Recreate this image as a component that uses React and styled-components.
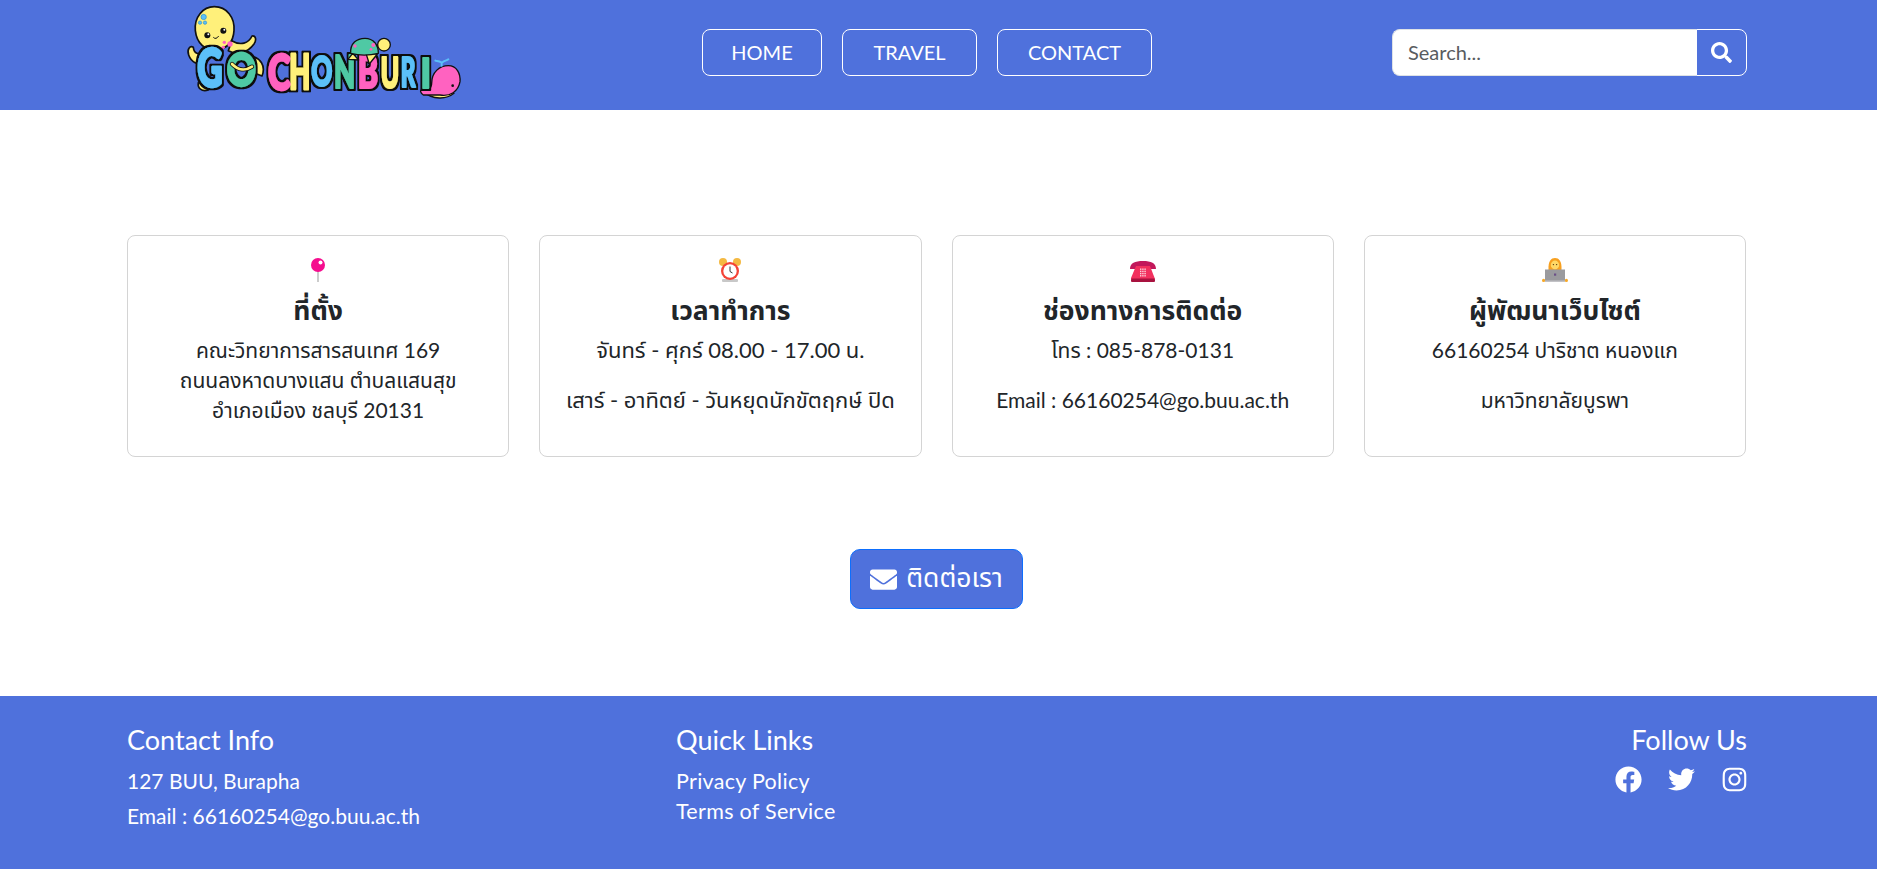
import React from 'react'
import styled, { createGlobalStyle } from 'styled-components'
import { FaSearch, FaEnvelope, FaFacebook, FaTwitter, FaInstagram } from 'react-icons/fa'

const BLUE = '#4f71dc'
const FONT = '"Lato", "Noto Sans", "Noto Sans Thai", "Liberation Sans", sans-serif'

const GlobalStyle = createGlobalStyle`
  * { box-sizing: border-box; }
  html, body { margin: 0; padding: 0; background: #fff; }
  body { font-family: ${FONT}; color: #212529; }
`

// letter, x, baseline, scale x, scale y, fill
const letters = [
  ['G', 82, 262, 1.05, 1.62, '#5bc0f8'],
  ['O', 170, 258, 1.08, 1.38, '#4fc9a4'],
  ['C', 294, 270, 1.03, 1.5, '#ff62c0'],
  ['H', 358, 266, 0.82, 1.45, '#fff07a'],
  ['O', 424, 258, 0.78, 1.28, '#5bc0f8'],
  ['N', 492, 263, 0.82, 1.34, '#4fc9a4'],
  ['B', 563, 263, 0.92, 1.34, '#ff62c0'],
  ['U', 632, 263, 0.74, 1.28, '#fff07a'],
  ['R', 692, 260, 0.68, 1.24, '#5bc0f8'],
  ['I', 752, 263, 1.0, 1.28, '#4fc9a4'],
]

const Logo = () => (
  <LogoSvg viewBox="0 0 960 330" role="img" aria-label="Go Chonburi">
    <defs>
      <filter id="letter-outline" x="-3%" y="-5%" width="106%" height="110%">
        <feMorphology in="SourceAlpha" operator="dilate" radius="5" result="grown" />
        <feFlood floodColor="#111" />
        <feComposite in2="grown" operator="in" result="edge" />
        <feMerge>
          <feMergeNode in="edge" />
          <feMergeNode in="SourceGraphic" />
        </feMerge>
      </filter>
    </defs>

    <g stroke="#111" strokeWidth="5" strokeLinejoin="round">
      {/* octopus */}
      <path d="M185 122 C212 138 236 130 246 108 C258 106 260 120 252 132 C232 160 200 166 175 152 Z" fill="#fff07a" />
      <path d="M105 152 C85 168 72 160 70 142 C60 136 50 148 56 165 C64 188 85 198 110 188 Z" fill="#fff07a" />
      <path d="M240 168 C272 172 288 198 276 228 L250 218 Z" fill="#fff07a" />
      <path d="M85 248 C82 265 95 276 115 270 L110 245 Z" fill="#fff07a" />
      <path d="M133 20 C170 20 195 52 192 92 C190 125 175 145 140 150 C105 152 80 130 76 92 C72 52 98 20 133 20 Z" fill="#fff07a" />
    </g>
    <circle cx="101" cy="51" r="8" fill="#5bc0f8" stroke="#2a90d0" strokeWidth="2" />
    <circle cx="90" cy="68" r="5" fill="#5bc0f8" stroke="#2a90d0" strokeWidth="2" />
    <circle cx="105" cy="68" r="5" fill="#5bc0f8" stroke="#2a90d0" strokeWidth="2" />
    <circle cx="112" cy="106" r="9" fill="#111" />
    <circle cx="160" cy="92" r="9" fill="#111" />
    <circle cx="115" cy="103" r="3" fill="#fff" />
    <circle cx="163" cy="89" r="3" fill="#fff" />
    <path d="M130 112 Q138 120 146 108" fill="none" stroke="#111" strokeWidth="3" />
    <circle cx="180" cy="132" r="8" fill="#ff62c0" />
    <circle cx="163" cy="127" r="5" fill="#ff62c0" />
    <circle cx="160" cy="142" r="5" fill="#ff62c0" />

    {/* whale */}
    <g stroke="#111" strokeWidth="4" strokeLinejoin="round">
      <path d="M755 272 C790 302 830 298 852 280 L790 262 Z" fill="#fff07a" />
      <path d="M785 250 C785 215 810 197 835 197 C860 197 872 220 870 245 C865 275 840 290 810 285 L760 285 C750 278 750 270 755 270 C770 270 785 270 785 250 Z" fill="#ff62c0" />
    </g>
    <circle cx="848" cy="257" r="4" fill="#111" />
    <path d="M815 197 L815 188 M815 188 C805 182 800 184 796 182 M815 188 C825 180 830 182 835 178" fill="none" stroke="#5bc0f8" strokeWidth="6" strokeLinecap="round" />

    <g filter="url(#letter-outline)">
      {letters.map(([ch, x, y, sx, sy, color], i) => (
        <LogoLetter key={i} transform={`translate(${x} ${y}) scale(${sx} ${sy})`} fill={color} stroke={color}>{ch}</LogoLetter>
      ))}
    </g>

    {/* arm through the O */}
    <path d="M186 192 C205 212 228 212 246 200" fill="none" stroke="#111" strokeWidth="13" strokeLinecap="round" />
    <path d="M186 192 C205 212 228 212 246 200" fill="none" stroke="#fff07a" strokeWidth="8" strokeLinecap="round" />

    {/* turtle */}
    <g stroke="#111" strokeWidth="4" strokeLinejoin="round">
      <path d="M548 160 L534 178 L566 180 Z" fill="#fff07a" />
      <path d="M588 160 L598 192 L622 162 Z" fill="#fff07a" />
      <circle cx="642" cy="134" r="19" fill="#fff07a" />
      <path d="M542 160 C540 130 560 115 585 115 C610 115 626 135 625 160 C600 166 565 166 542 160 Z" fill="#4fc9a4" />
    </g>
    <circle cx="555" cy="138" r="5" fill="#ff62c0" />
    <circle cx="610" cy="135" r="6" fill="#ff62c0" />
    <circle cx="603" cy="148" r="4" fill="#ff62c0" />
  </LogoSvg>
)

const PinIcon = () => (
  <svg width="24" height="24" viewBox="0 0 24 24">
    <rect x="11" y="12" width="2" height="12" fill="#ccc" />
    <circle cx="12" cy="7" r="7" fill="#f50d8e" />
    <circle cx="14.5" cy="4.5" r="2" fill="#fff" />
  </svg>
)

const ClockIcon = () => (
  <svg width="24" height="24" viewBox="0 0 24 24">
    <circle cx="5" cy="4" r="4" fill="#f4b942" />
    <circle cx="19" cy="4" r="4" fill="#f4b942" />
    <rect x="4" y="21" width="16" height="3" rx="1" fill="#c8c8c8" />
    <circle cx="12" cy="13" r="9" fill="#f44336" />
    <circle cx="12" cy="13" r="6.7" fill="#fff" />
    <path d="M12 8.5 V13.5 L14.5 15" fill="none" stroke="#333" strokeWidth="1" />
  </svg>
)

const dialDots = [0, 1, 2, 3].flatMap((row) => [0, 1, 2].map((col) => [col, row]))

const PhoneIcon = () => (
  <svg width="26" height="24" viewBox="0 0 26 24">
    <path d="M0 11 C0 5 5 3 13 3 C21 3 26 5 26 11 L20 11 L20 8 L6 8 L6 11 Z" fill="#c2185b" />
    <path d="M6 8 L20 8 L25 21 L1 21 L1 20 Z" fill="#f2305e" />
    <rect x="1" y="20.5" width="24" height="3.5" rx="1" fill="#a8123f" />
    {dialDots.map(([col, row]) => (
      <rect key={`${col}-${row}`} x={10 + col * 2.2} y={10.5 + row * 2.2} width="1.4" height="1.4" fill="#fbd3dc" />
    ))}
  </svg>
)

const DevIcon = () => (
  <svg width="26" height="24" viewBox="0 0 26 24">
    <path d="M6.5 12 C6 3 9 0 13 0 C17 0 20 3 19.5 12 Z" fill="#f7a020" />
    <ellipse cx="13" cy="7" rx="4.2" ry="4.4" fill="#ffd866" />
    <circle cx="11.4" cy="6.6" r="0.7" fill="#5a3a10" />
    <circle cx="14.6" cy="6.6" r="0.7" fill="#5a3a10" />
    <circle cx="1.6" cy="22.4" r="1.6" fill="#f7a928" />
    <circle cx="24.4" cy="22.4" r="1.6" fill="#f7a928" />
    <rect x="3" y="11.5" width="20" height="11.5" fill="#9a9a9e" />
    <rect x="3" y="22.5" width="20" height="1.5" fill="#c2c2c6" />
    <rect x="12" y="15.5" width="2.2" height="2.2" fill="#6b4f87" />
  </svg>
)

const cards = [
  { icon: <PinIcon />, title: 'ที่ตั้ง', tight: true, lines: ['คณะวิทยาการสารสนเทศ 169', 'ถนนลงหาดบางแสน ตำบลแสนสุข', 'อำเภอเมือง ชลบุรี 20131'] },
  { icon: <ClockIcon />, title: 'เวลาทำการ', wide: true, lines: ['จันทร์ - ศุกร์ 08.00 - 17.00 น.', 'เสาร์ - อาทิตย์ - วันหยุดนักขัตฤกษ์ ปิด'] },
  { icon: <PhoneIcon />, title: 'ช่องทางการติดต่อ', lines: ['โทร : 085-878-0131', 'Email : 66160254@go.buu.ac.th'] },
  { icon: <DevIcon />, title: 'ผู้พัฒนาเว็บไซต์', lines: ['66160254 ปาริชาต หนองแก', 'มหาวิทยาลัยบูรพา'] },
]

const App = () => (
  <>
    <GlobalStyle />
    <Navbar>
      <LogoLink href="#"><Logo /></LogoLink>
      <NavLinks>
        <NavLink href="#" $w={120}>HOME</NavLink>
        <NavLink href="#" $w={135}>TRAVEL</NavLink>
        <NavLink href="#" $w={155}>CONTACT</NavLink>
      </NavLinks>
      <SearchForm>
        <SearchInput placeholder="Search..." />
        <SearchButton type="button"><FaSearch /></SearchButton>
      </SearchForm>
    </Navbar>

    <Main>
      <CardGrid>
        {cards.map((card) => (
          <Card key={card.title}>
            <CardIcon>{card.icon}</CardIcon>
            <CardTitle>{card.title}</CardTitle>
            {card.tight ? (
              <CardText>{card.lines.map((l) => <span key={l}>{l}</span>)}</CardText>
            ) : (
              card.lines.map((l) => <CardText key={l} $wide={card.wide}>{l}</CardText>)
            )}
          </Card>
        ))}
      </CardGrid>
      <ContactButton type="button"><FaEnvelope /> ติดต่อเรา</ContactButton>
    </Main>

    <Footer>
      <FooterColumn>
        <FooterTitle>Contact Info</FooterTitle>
        <FooterText>127 BUU, Burapha</FooterText>
        <FooterText>Email : 66160254@go.buu.ac.th</FooterText>
      </FooterColumn>
      <FooterColumn>
        <FooterTitle>Quick Links</FooterTitle>
        <FooterLink href="#">Privacy Policy</FooterLink>
        <FooterLink href="#">Terms of Service</FooterLink>
      </FooterColumn>
      <FooterColumn $right>
        <FooterTitle>Follow Us</FooterTitle>
        <Socials>
          <FaFacebook />
          <FaTwitter />
          <FaInstagram />
        </Socials>
      </FooterColumn>
    </Footer>
  </>
)

const Navbar = styled.nav`
  height: 110px;
  background: ${BLUE};
  display: flex;
  align-items: flex-start;
  padding: 0 130px 0 170px;
`

const LogoLink = styled.a`
  display: block;
  flex: none;
  width: 320px;
  height: 110px;
`

const LogoSvg = styled.svg`
  display: block;
  width: 320px;
  height: 110px;
`

const LogoLetter = styled.text`
  font-family: "Lato", sans-serif;
  font-size: 100px;
  font-weight: 900;
  stroke-width: 5px;
  stroke-linejoin: round;
`

const NavLinks = styled.div`
  display: flex;
  gap: 20px;
  margin-left: 212px;
  margin-top: 29px;
`

const NavLink = styled.a`
  width: ${(p) => p.$w}px;
  height: 47px;
  padding-bottom: 2px;
  display: flex;
  align-items: center;
  justify-content: center;
  border: 1px solid #fff;
  border-radius: 8px;
  color: #fff;
  font-size: 20px;
  text-decoration: none;
`

const SearchForm = styled.form`
  display: flex;
  width: 355px;
  height: 47px;
  margin-left: auto;
  margin-top: 29px;
`

const SearchInput = styled.input`
  flex: 1;
  min-width: 0;
  border: 1px solid #dee2e6;
  border-right: none;
  border-radius: 8px 0 0 8px;
  padding: 0 15px 2px;
  font-family: ${FONT};
  font-size: 20px;
  color: #212529;
  outline: none;
  &::placeholder { color: #595c5f; }
`

const SearchButton = styled.button`
  width: 51px;
  flex: none;
  background: transparent;
  border: 1px solid #fff;
  border-radius: 0 8px 8px 0;
  color: #fff;
  font-size: 21px;
  display: flex;
  align-items: center;
  justify-content: center;
  padding: 0;
`

const Main = styled.main`
  height: 586px;
  padding: 125px 131px 0 127px;
  display: flex;
  flex-direction: column;
  align-items: center;
`

const CardGrid = styled.div`
  width: 100%;
  display: grid;
  grid-template-columns: repeat(4, 1fr);
  gap: 30px;
`

const Card = styled.div`
  height: 222px;
  border: 1px solid #d4d4d4;
  border-radius: 8px;
  padding: 22px 16px 0;
  text-align: center;
`

const CardIcon = styled.div`
  height: 24px;
  display: flex;
  justify-content: center;
  svg { display: block; }
`

const CardTitle = styled.h3`
  margin: 6px 0 3px;
  height: 44px;
  line-height: 44px;
  font-size: 26.5px;
  font-weight: 700;
`

const CardText = styled.p`
  margin: 0 0 20px;
  font-size: ${(p) => (p.$wide ? '22px' : '21px')};
  line-height: 30px;
  white-space: nowrap;

  span { display: block; }
`

const ContactButton = styled.button`
  margin-top: 92px;
  width: 173px;
  height: 60px;
  background: ${BLUE};
  border: 1px solid #0d6efd;
  border-radius: 10px;
  color: #fff;
  font-family: ${FONT};
  font-size: 26.5px;
  display: flex;
  align-items: center;
  justify-content: center;
  gap: 9px;
  padding: 0;

  svg { font-size: 27px; }
`

const Footer = styled.footer`
  height: 173px;
  background: ${BLUE};
  color: #fff;
  padding: 26px 130px 0 127px;
  display: grid;
  grid-template-columns: repeat(3, 1fr);
  column-gap: 27px;
`

const FooterColumn = styled.div`
  display: flex;
  flex-direction: column;
  align-items: ${(p) => (p.$right ? 'flex-end' : 'flex-start')};
`

const FooterTitle = styled.h5`
  margin: 0 0 8px;
  font-size: 27px;
  line-height: 36px;
  font-weight: 400;
`

const FooterText = styled.p`
  margin: 0 0 5px;
  font-size: 21px;
  line-height: 30px;
`

const FooterLink = styled.a`
  color: #fff;
  font-size: 21.5px;
  line-height: 30px;
  letter-spacing: 0.3px;
  text-decoration: none;
`

const Socials = styled.div`
  display: flex;
  gap: 26px;
  font-size: 27px;
  margin-right: -1px;

  svg { display: block; width: auto; height: 1em; }
`

export default App
